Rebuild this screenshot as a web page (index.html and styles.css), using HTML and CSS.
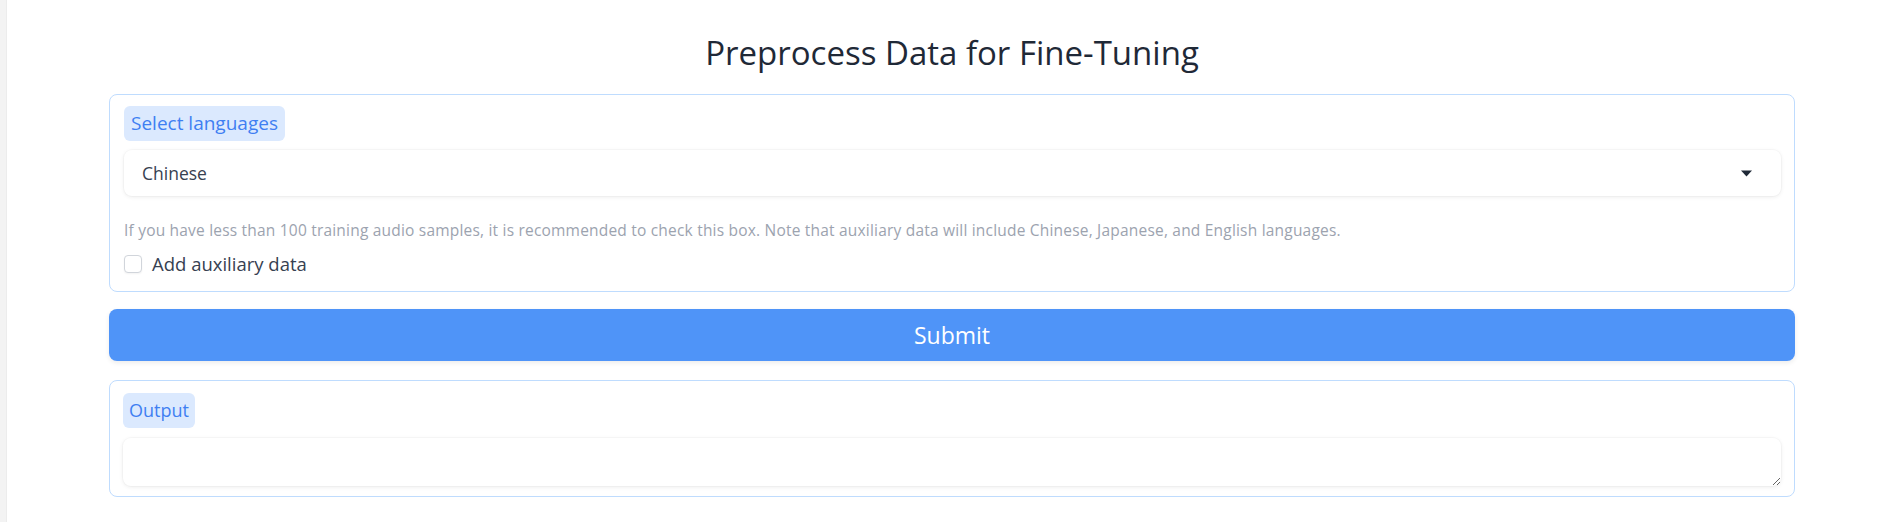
FILE: index.html
```html
<!DOCTYPE html>
<html lang="en">
<head>
<meta charset="utf-8">
<title>Preprocess Data for Fine-Tuning</title>
<link rel="stylesheet" href="styles.css">
</head>
<body>
<div class="strip"></div>
<main class="app">
  <h1 class="title">Preprocess Data for Fine-Tuning</h1>

  <section class="block">
    <span class="label">Select languages</span>
    <div class="dropdown">
      <span class="dd-value">Chinese</span>
      <svg class="caret" width="11" height="7" viewBox="0 0 11 7"><path d="M0 0.5 H11 L5.5 6.5 Z" fill="#1f2937"/></svg>
    </div>
    <p class="info">If you have less than 100 training audio samples, it is recommended to check this box. Note that auxiliary data will include Chinese, Japanese, and English languages.</p>
    <label class="check-row"><span class="checkbox"></span><span class="check-text">Add auxiliary data</span></label>
  </section>

  <button class="submit">Submit</button>

  <section class="block out-block">
    <span class="label label-out">Output</span>
    <textarea class="output" rows="1"></textarea>
  </section>
</main>
</body>
</html>
```

FILE: styles.css
```css
html, body {
  margin: 0;
  padding: 0;
  background: #ffffff;
}
body {
  display: flex;
  min-height: 522px;
  font-family: "Open Sans", "Noto Sans", sans-serif;
  color: #1f2937;
}
.strip {
  width: 6px;
  flex: none;
  background: #f3f3f3;
  border-right: 1px solid #ececec;
}
.app {
  flex: 1;
  padding: 0 99px 0 102px;
  display: flex;
  flex-direction: column;
}
.title {
  margin: 33px 0 0;
  height: 61px;
  font-weight: 400;
  font-size: 33px;
  line-height: 40px;
  text-align: center;
  color: #1f2937;
}
.block {
  border: 1px solid #bfdcfe;
  border-radius: 8px;
  padding: 11px 13px 17px 14px;
  display: flex;
  flex-direction: column;
  align-items: flex-start;
}
.label {
  background: #dbe9fe;
  color: #3f7ff2;
  font-size: 19px;
  line-height: 35px;
  height: 35px;
  padding: 0 7px;
  border-radius: 6px;
}
.dropdown {
  align-self: stretch;
  margin-top: 9px;
  height: 46px;
  border-radius: 8px;
  background: #fff;
  box-shadow: 0 1px 4px rgba(0,0,0,0.08), 0 0 0 1px rgba(0,0,0,0.02);
  display: flex;
  align-items: center;
  justify-content: space-between;
  padding: 0 29px 0 18px;
}
.dd-value {
  font-size: 17.5px;
  color: #374151;
}
.caret { display: block; }
.info {
  margin: 24px 0 0;
  font-size: 15.5px;
  letter-spacing: 0.2px;
  line-height: 20px;
  color: #9ca3af;
}
.check-row {
  margin-top: 14px;
  display: flex;
  align-items: center;
  gap: 10px;
  height: 20px;
}
.checkbox {
  width: 16px;
  height: 16px;
  border: 1px solid #d1d5db;
  border-radius: 4px;
  background: #fff;
  box-shadow: 0 1px 2px rgba(0,0,0,0.05);
}
.check-text {
  font-size: 18.5px;
  line-height: 20px;
  color: #374151;
}
.submit {
  margin-top: 17px;
  height: 52px;
  border: none;
  border-radius: 8px;
  background: #4f94f8;
  color: #fff;
  font-family: "Open Sans", "Noto Sans", sans-serif;
  font-size: 23px;
  font-weight: 500;
  box-shadow: 0 2px 5px rgba(0,0,0,0.08);
}
.out-block {
  margin-top: 19px;
  padding: 12px 13px 10px 13px;
}
.label-out {
  font-size: 18px;
  padding: 0 6px;
}
.output {
  align-self: stretch;
  margin-top: 10px;
  height: 48px;
  box-sizing: border-box;
  border: none;
  border-radius: 8px;
  background: #fff;
  box-shadow: 0 1px 4px rgba(0,0,0,0.08), 0 0 0 1px rgba(0,0,0,0.02);
  resize: vertical;
  font-family: "Open Sans", sans-serif;
  font-size: 16px;
  padding: 10px 14px;
  outline: none;
}
```
